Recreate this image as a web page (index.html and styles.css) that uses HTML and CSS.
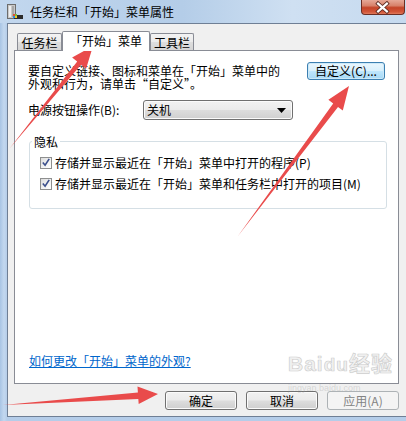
FILE: index.html
```html
<!DOCTYPE html>
<html lang="zh-CN">
<head>
<meta charset="utf-8">
<title>任务栏和「开始」菜单属性</title>
<link rel="stylesheet" href="styles.css">
</head>
<body>
<div class="win">
  <div class="titlebar">
    <svg class="appicon" width="16" height="16" viewBox="0 0 16 16">
      <rect x="0.5" y="0.5" width="8" height="14" fill="#c9c9c9" stroke="#6d6d6d"/>
      <rect x="2" y="2" width="2" height="11" fill="#eeeeee"/>
      <rect x="5" y="2" width="2" height="11" fill="#a8a8a8"/>
      <rect x="7" y="11" width="9" height="4" fill="#2b2b2b"/>
      <rect x="6" y="10" width="2" height="2" fill="#e8502c"/>
      <rect x="8" y="10" width="2" height="2" fill="#7dbb3a"/>
      <rect x="6" y="12" width="2" height="2" fill="#2b8fe0"/>
      <rect x="8" y="12" width="2" height="2" fill="#f5c623"/>
    </svg>
    <span class="title">任务栏和「开始」菜单属性</span>
    <div class="close">
      <svg width="44" height="15" viewBox="0 0 44 15">
        <path d="M17.5 3.5 L26.5 11.5 M26.5 3.5 L17.5 11.5" stroke="#5a2a22" stroke-width="4" stroke-linecap="square"/>
        <path d="M17.5 3.5 L26.5 11.5 M26.5 3.5 L17.5 11.5" stroke="#ffffff" stroke-width="2.2" stroke-linecap="square"/>
      </svg>
    </div>
  </div>
  <div class="frame">
    <div class="dialog">
      <div class="tabs">
        <div class="tab t1">任务栏</div>
        <div class="tab active">「开始」菜单</div>
        <div class="tab t3">工具栏</div>
      </div>
      <div class="panel">
        <div class="row-top">
          <p class="desc"><span class="line">要自定义链接、图标和菜单在「开始」菜单中的</span><span class="line">外观和行为，请单击“自定义”。</span></p>
          <button class="btn btn-default">自定义(C)...</button>
        </div>
        <div class="row-power">
          <span class="label">电源按钮操作(B):</span>
          <div class="select">
            <span>关机</span>
            <svg width="9" height="5" viewBox="0 0 9 5"><path d="M0 0 H9 L4.5 5 Z" fill="#000"/></svg>
          </div>
        </div>
        <fieldset class="group">
          <legend>隐私</legend>
          <label class="check">
            <span class="box"><svg width="11" height="11" viewBox="0 0 11 11"><path d="M2 5.5 L4.5 8.5 L9 1.5" fill="none" stroke="#3b4f8c" stroke-width="1.8"/></svg></span>
            存储并显示最近在「开始」菜单中打开的程序(P)
          </label>
          <label class="check">
            <span class="box"><svg width="11" height="11" viewBox="0 0 11 11"><path d="M2 5.5 L4.5 8.5 L9 1.5" fill="none" stroke="#3b4f8c" stroke-width="1.8"/></svg></span>
            存储并显示最近在「开始」菜单和任务栏中打开的项目(M)
          </label>
        </fieldset>
        <a class="link" href="#">如何更改「开始」菜单的外观?</a>
      </div>
      <div class="actions">
        <button class="btn">确定</button>
        <button class="btn">取消</button>
        <button class="btn disabled">应用(A)</button>
      </div>
    </div>
  </div>
</div>
<div class="watermark">
  <span class="wm-big">Bai<span class="wm-du">du</span>经验</span>
  <span class="wm-small">jingyan.baidu.com</span>
</div>
<svg class="annot" width="406" height="421" viewBox="0 0 406 421">
  <polygon points="10,148 81,64.7 86.1,68.8 93,46 72.1,57.4 77.2,61.5" fill="#e94b4b"/>
  <polygon points="238,236 338,107 342.8,110.6 349,86 328.4,99.8 333.2,103.4" fill="#e94b4b"/>
  <polygon points="3,405 138.3,399 138.7,404 158,394 137.5,386.5 137.9,392.4" fill="#e94b4b"/>
</svg>
</body>
</html>
```

FILE: styles.css
```css
* { box-sizing: border-box; }

html, body {
  margin: 0;
  padding: 0;
}

body {
  width: 406px;
  height: 421px;
  overflow: hidden;
  position: relative;
  background: #b3cce8;
  font-family: "Noto Sans CJK SC", "Liberation Sans", sans-serif;
  font-size: 12px;
  color: #000;
}

.win {
  height: 421px;
  display: flex;
  flex-direction: column;
}

.titlebar {
  height: 23px;
  display: flex;
  align-items: center;
  padding-left: 7px;
  background: linear-gradient(90deg, #c2d7ee 0%, #b4cde8 45%, #cfe0f2 72%, #c6daef 100%);
}

.appicon {
  width: 16px;
  height: 16px;
  margin-right: 7px;
  flex: none;
}

.title {
  font-size: 12px;
  line-height: 14px;
  color: #000;
}

.close {
  margin-left: auto;
  margin-right: 1px;
  align-self: flex-start;
  width: 44px;
  height: 15px;
  border: 1px solid #6b2e24;
  border-top: none;
  border-radius: 0 0 4px 4px;
  background: linear-gradient(180deg, #e6a897 0%, #d8826b 40%, #c44428 55%, #d2573a 85%, #e07a5c 100%);
  display: flex;
  align-items: center;
  justify-content: center;
  overflow: hidden;
}

.close svg { display: block; margin-left: -1px; }

.frame {
  flex: 1;
  padding-left: 7px;
  padding-bottom: 4px;
  background: linear-gradient(90deg, #a8c4e4 0%, #c3d8ef 4px, #b5cde9 7px);
  display: flex;
}

.dialog {
  flex: 1;
  height: 394px;
  background: #f0f0f0;
  border-left: 1px solid #6f7f95;
  border-top: 1px solid #6f7f95;
  border-bottom: 1px solid #6f7f95;
  padding: 7px 0 0 6px;
  display: flex;
  flex-direction: column;
}

.tabs {
  height: 20px;
  display: flex;
  align-items: flex-end;
  padding-left: 3px;
  margin-bottom: -1px;
  position: relative;
  z-index: 1;
}

.tab {
  height: 17px;
  margin-bottom: 1px;
  border: 1px solid #898c95;
  border-bottom: none;
  border-radius: 2px 2px 0 0;
  background: linear-gradient(180deg, #f3f3f3 0%, #ebebeb 50%, #dedede 51%, #d5d5d5 100%);
  display: flex;
  align-items: center;
  justify-content: center;
  font-size: 12px;
  line-height: 14px;
  padding-top: 1px;
}

.t1 { width: 45px; }
.t3 { width: 44px; }

.tab.active {
  width: 88px;
  height: 20px;
  margin-bottom: 0;
  background: #ffffff;
  padding-bottom: 2px;
}

.panel {
  width: 385px;
  height: 334px;
  border: 1px solid #898c95;
  background: #ffffff;
  padding: 11px 13px 0 13px;
  display: flex;
  flex-direction: column;
}

.row-top {
  display: flex;
  justify-content: space-between;
  align-items: flex-start;
}

.desc {
  margin: 1px 0 0 0;
  font-size: 12px;
  display: flex;
  flex-direction: column;
}

.desc .line {
  display: block;
  height: 13px;
  line-height: 15px;
  overflow: visible;
}

.btn {
  font-family: "Noto Sans CJK SC", "Liberation Sans", sans-serif;
  font-size: 12px;
  line-height: 14px;
  color: #000;
  height: 19px;
  width: 72px;
  padding: 0;
  border: 1px solid #707070;
  border-radius: 3px;
  background: linear-gradient(180deg, #f2f2f2 0%, #ebebeb 48%, #dddddd 52%, #cfcfcf 100%);
  box-shadow: inset 0 0 0 1px #fbfbfb;
  display: flex;
  align-items: center;
  justify-content: center;
}

.btn-default {
  width: 78px;
  height: 18px;
  border-color: #3c7fb1;
  background: linear-gradient(180deg, #eaf6fd 0%, #d9f0fc 48%, #bee6fd 52%, #a7d9f5 100%);
  box-shadow: inset 0 0 0 1px #cde9f8;
}

.btn.disabled {
  border-color: #adb2b5;
  background: #f4f4f4;
  box-shadow: none;
  color: #838383;
}

.row-power {
  margin-top: 11px;
  display: flex;
  align-items: center;
}

.label {
  width: 115px;
  flex: none;
  line-height: 14px;
}

.select {
  width: 150px;
  height: 20px;
  border: 1px solid #707070;
  border-radius: 3px;
  background: linear-gradient(180deg, #f2f2f2 0%, #ebebeb 48%, #dddddd 52%, #cfcfcf 100%);
  box-shadow: inset 0 0 0 1px #fbfbfb;
  display: flex;
  align-items: center;
  justify-content: space-between;
  padding: 0 6px 0 3px;
  line-height: 14px;
}

.select svg { display: block; }

.group {
  margin: 14px 0 0 1px;
  width: 358px;
  padding: 6px 0 17px 10px;
  border: 1px solid #d5dfe5;
  border-radius: 3px;
  min-width: 0;
}

.group legend {
  padding: 0 2px;
  margin-left: -8px;
  line-height: 15px;
  font-size: 12px;
}

.check {
  display: flex;
  align-items: center;
  line-height: 15px;
  height: 15px;
}

.check + .check { margin-top: 6px; }

.box {
  width: 12px;
  height: 12px;
  margin-right: 3px;
  border: 1px solid #8e8f8f;
  background: linear-gradient(135deg, #dcdcdc 0%, #f4f4f4 60%, #ffffff 100%);
  display: flex;
  align-items: center;
  justify-content: center;
  flex: none;
}

.box svg { display: block; }

.link {
  margin-top: auto;
  margin-bottom: 15px;
  margin-left: 1px;
  line-height: 15px;
  color: #0066cc;
  text-decoration: underline;
  align-self: flex-start;
}

.actions {
  margin-top: 7px;
  display: flex;
  justify-content: flex-end;
  gap: 9px;
  padding-right: 7px;
}

.watermark {
  position: absolute;
  left: 288px;
  top: 352px;
  display: flex;
  flex-direction: column;
  align-items: flex-start;
  pointer-events: none;
  color: rgba(255, 255, 255, 0.6);
  text-shadow: 0 0 1px rgba(150, 150, 150, 0.35);
  font-family: "Liberation Sans", "Noto Sans CJK SC", sans-serif;
}

.wm-big {
  font-size: 21px;
  font-weight: bold;
  line-height: 24px;
  letter-spacing: 1px;
  -webkit-text-stroke: 0.6px rgba(170, 170, 170, 0.55);
}

.wm-du {
  font-size: 19px;
}

.wm-small {
  font-size: 9px;
  line-height: 10px;
  margin-top: 6px;
  color: rgba(160, 160, 160, 0.35);
  text-shadow: none;
}

.annot {
  position: absolute;
  left: 0;
  top: 0;
  pointer-events: none;
}
```
